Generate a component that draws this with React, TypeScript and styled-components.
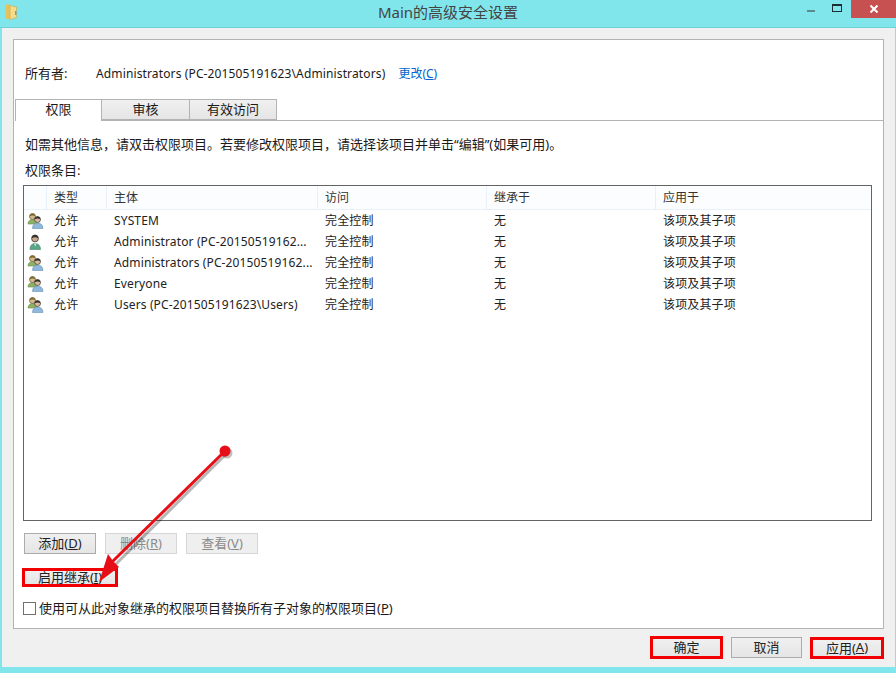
import React from "react";
import styled, { createGlobalStyle } from "styled-components";

const Global = createGlobalStyle`
  html, body { margin: 0; padding: 0; background: #80e6ec; }
  body { font-family: "Noto Sans", "Noto Sans CJK SC", sans-serif; font-size: 12px; color: #1a1a1a; }
  #root { width: 896px; height: 673px; overflow: hidden; }
`;

const Win = styled.div`
  position: relative;
  width: 896px;
  height: 673px;
  display: flex;
  flex-direction: column;
  background: #80e6ec;
`;

const TitleBar = styled.header`
  height: 27px;
  flex: none;
  display: flex;
  align-items: flex-start;
  border-bottom: 1px solid #6fcfd6;
`;

const FolderSlot = styled.div`
  width: 20px;
  padding: 4px 0 0 5px;
  box-sizing: border-box;
  flex: none;
`;

const Title = styled.div`
  flex: 1;
  text-align: center;
  font-size: 15px;
  line-height: 25px;
  padding-left: 78px;
  color: #444;
`;

const Controls = styled.div`
  display: flex;
  flex: none;
  align-items: flex-start;
`;

const Ctl = styled.div<{ $w: number; $top: number }>`
  width: ${(p) => p.$w}px;
  height: 18px;
  box-sizing: border-box;
  padding-top: ${(p) => p.$top}px;
  display: flex;
  justify-content: center;
  & svg { display: block; }
`;

const CloseCtl = styled(Ctl)`
  background: #c75050;
`;

const Body = styled.div`
  flex: 1;
  margin: 0 1px 6px 2px;
  background: #f0f0f0;
  display: flex;
  flex-direction: column;
  padding: 11px 11px 0 11px;
  min-height: 0;
`;

const Panel = styled.section`
  height: 590px;
  flex: none;
  box-sizing: border-box;
  background: #fff;
  border: 1px solid #b3b3b3;
  padding: 23px 0 0 1px;
`;

const OwnerRow = styled.div`
  display: flex;
  align-items: center;
  height: 20px;
  padding-left: 10px;
`;

const OwnerLabel = styled.span`
  width: 71px;
  font-size: 13px;
  margin-top: -1px;
`;

const OwnerName = styled.span`
  letter-spacing: 0.13px;
`;

const Link = styled.span`
  color: #0066cc;
  margin-left: 13px;
`;

const TabStrip = styled.div`
  display: flex;
  height: 22px;
  margin-top: 16px;
  box-sizing: border-box;
  border-bottom: 1px solid #b3b3b3;
`;

const Tab = styled.div<{ $active?: boolean; $w: number }>`
  width: ${(p) => p.$w}px;
  box-sizing: border-box;
  height: ${(p) => (p.$active ? 22 : 21)}px;
  text-align: center;
  line-height: 19px;
  font-size: 13px;
  margin-right: -1px;
  border: 1px solid #b3b3b3;
  border-bottom: ${(p) => (p.$active ? "0" : "1px solid #b3b3b3")};
  background: ${(p) => (p.$active ? "#fff" : "linear-gradient(#f0f0f0, #e5e5e5)")};
  position: relative;
  z-index: ${(p) => (p.$active ? 1 : 0)};
`;

const TabBody = styled.div`
  padding: 14px 11px 0 8px;
`;

const Desc = styled.div`
  height: 18px;
  line-height: 18px;
  padding-left: 2px;
  font-size: 13px;
  white-space: nowrap;
`;

const SubLabel = styled(Desc)`
  margin-top: 8px;
`;

const List = styled.div`
  margin-top: 6px;
  height: 336px;
  box-sizing: border-box;
  border: 1px solid #646464;
  background: #fff;
`;

const GRID = "23px 60px 211px 169px 169px 1fr";

const Head = styled.div`
  display: grid;
  grid-template-columns: ${GRID};
  height: 24px;
  box-sizing: border-box;
  border-bottom: 1px solid #e8f1fa;
  background: #fcfdfe;
`;

const HeadCell = styled.div`
  line-height: 24px;
  padding-left: 7px;
  border-right: 1px solid #e8f1fa;
  color: #333;
  &:last-child { border-right: 0; }
`;

const Row = styled.div`
  display: grid;
  grid-template-columns: ${GRID};
  height: 21px;
  align-items: center;
  line-height: 21px;
`;

const Cell = styled.div`
  padding-left: 7px;
  white-space: nowrap;
  overflow: hidden;
  letter-spacing: 0.13px;
  color: #222;
`;

const IconCell = styled.div`
  display: flex;
  align-items: center;
  padding-left: 3px;
  margin-right: -4px;
`;

const ActionRow = styled.div`
  display: flex;
  gap: 9px;
  margin-top: 12px;
  padding-left: 1px;
`;

const Btn = styled.div<{ $w: number; $h: number; $disabled?: boolean; $marked?: boolean }>`
  width: ${(p) => p.$w}px;
  height: ${(p) => p.$h}px;
  box-sizing: border-box;
  display: flex;
  align-items: center;
  justify-content: center;
  padding-bottom: 2px;
  white-space: nowrap;
  font-size: 13px;
  color: ${(p) => (p.$disabled ? "#8a8a8a" : "#222")};
  border: ${(p) =>
    p.$marked ? "3px solid #f20000" : p.$disabled ? "1px solid #d6d6d6" : "1px solid #acacac"};
  background: ${(p) => (p.$disabled ? "#efefef" : "linear-gradient(#f0f0f0, #e5e5e5)")};
`;

const RaisedBtn = styled(Btn)`
  margin-top: -1px;
`;

const EnableWrap = styled.div`
  margin-top: 14px;
  margin-left: -1px;
`;

const CheckRow = styled.label`
  display: flex;
  align-items: center;
  height: 18px;
  margin-top: 12px;
  font-size: 13px;
  white-space: nowrap;
`;

const CheckText = styled.span`
  margin-top: -2px;
`;

const CheckBox = styled.span`
  width: 13px;
  height: 13px;
  box-sizing: border-box;
  border: 1px solid #707070;
  background: #fff;
  margin-right: 3px;
  flex: none;
`;

const Footer = styled.footer`
  display: flex;
  justify-content: flex-end;
  align-items: flex-start;
  margin-top: 8px;
  gap: 8px;
`;

const ArrowLayer = styled.svg`
  position: absolute;
  left: 0;
  top: 0;
  pointer-events: none;
`;

const Folder = () => (
  <svg width="13" height="16" viewBox="0 0 13 16" style={{ display: "block" }}>
    <path d="M0.500 0.500h4l1 1v13.500h-5z" fill="#e6c25c" />
    <path d="M5 1.500l6.500 1.500v10.500l-6.500 2z" fill="#f4dc8a" stroke="#cda94a" strokeWidth=".6" />
    <rect x="10" y="7" width="1.500" height="4" fill="#5f9fd4" />
  </svg>
);

const Group = () => (
  <svg width="17" height="16" viewBox="0 0 17 16">
    <path d="M1 11c0-3 2-4.500 4.500-4.500S10 8 10 11z" fill="#8db263" stroke="#6a8a4a" strokeWidth=".6" />
    <circle cx="5.500" cy="3.500" r="3" fill="#d6b98c" stroke="#6a5a34" strokeWidth=".7" />
    <path d="M2.700 3.500c0-2 1.300-3 2.800-3s2.800 1 2.800 3c-1.500-1.500-3.500-1.500-5.600 0z" fill="#7b6a30" />
    <path d="M5.500 15.500c0-3.800 2.200-5.500 5-5.500s5.500 1.700 5.500 5.500z" fill="#8fb8dc" stroke="#6890b4" strokeWidth=".6" />
    <circle cx="10.500" cy="6.500" r="3" fill="#d8b89c" stroke="#3f3a34" strokeWidth=".7" />
    <path d="M7.600 6.500c0-2 1.400-3 2.900-3s2.900 1 2.900 3c-1.600-1.300-3.900-1.300-5.800 0z" fill="#33302c" />
  </svg>
);

const Single = () => (
  <svg width="17" height="16" viewBox="0 0 17 16">
    <path d="M3 15.500c0-4 2-6 5-6s5.500 2 5.500 6z" fill="#5aa587" stroke="#438468" strokeWidth=".6" />
    <path d="M7 9.500h2.500l-1.200 3z" fill="#e6e6e6" />
    <circle cx="8" cy="4.500" r="3.400" fill="#c9a98a" stroke="#3d3a34" strokeWidth=".8" />
    <path d="M4.700 4.500c0-2.500 1.600-3.700 3.300-3.700s3.300 1.200 3.300 3.700c-1.800-1.600-4.600-1.600-6.600 0z" fill="#34302c" />
  </svg>
);

const rows = [
  { icon: "g", name: "SYSTEM" },
  { icon: "s", name: "Administrator (PC-20150519162..." },
  { icon: "g", name: "Administrators (PC-20150519162..." },
  { icon: "g", name: "Everyone" },
  { icon: "g", name: "Users (PC-201505191623\\Users)" },
];

export default function App() {
  return (
    <Win>
      <Global />
      <TitleBar>
        <FolderSlot>
          <Folder />
        </FolderSlot>
        <Title>Main的高级安全设置</Title>
        <Controls>
          <Ctl $w={25} $top={10}>
            <svg width="8" height="2"><rect width="8" height="2" fill="#5b8a90" /></svg>
          </Ctl>
          <Ctl $w={28} $top={4}>
            <svg width="10" height="8"><rect x=".5" y=".5" width="9" height="7" fill="none" stroke="#1c2c30" /><rect width="10" height="2" fill="#1c2c30" /></svg>
          </Ctl>
          <CloseCtl $w={45} $top={5}>
            <svg width="8" height="8" viewBox="0 0 8 8"><path d="M.5 .5l7 7M7.500 .5l-7 7" stroke="#fff" strokeWidth="2" /></svg>
          </CloseCtl>
        </Controls>
      </TitleBar>
      <Body>
        <Panel>
          <OwnerRow>
            <OwnerLabel>所有者:</OwnerLabel>
            <OwnerName>Administrators (PC-201505191623\Administrators)</OwnerName>
            <Link>更改(<u>C</u>)</Link>
          </OwnerRow>
          <TabStrip>
            <Tab $active $w={87}>权限</Tab>
            <Tab $w={89}>审核</Tab>
            <Tab $w={88}>有效访问</Tab>
          </TabStrip>
          <TabBody>
            <Desc>如需其他信息，请双击权限项目。若要修改权限项目，请选择该项目并单击“编辑”(如果可用)。</Desc>
            <SubLabel>权限条目:</SubLabel>
            <List>
              <Head>
                <HeadCell />
                <HeadCell>类型</HeadCell>
                <HeadCell>主体</HeadCell>
                <HeadCell>访问</HeadCell>
                <HeadCell>继承于</HeadCell>
                <HeadCell>应用于</HeadCell>
              </Head>
              {rows.map((r) => (
                <Row key={r.name}>
                  <IconCell>{r.icon === "g" ? <Group /> : <Single />}</IconCell>
                  <Cell>允许</Cell>
                  <Cell>{r.name}</Cell>
                  <Cell>完全控制</Cell>
                  <Cell>无</Cell>
                  <Cell>该项及其子项</Cell>
                </Row>
              ))}
            </List>
            <ActionRow>
              <Btn $w={72} $h={21}>添加(<u>D</u>)</Btn>
              <Btn $w={72} $h={21} $disabled>删除(<u>R</u>)</Btn>
              <Btn $w={72} $h={21} $disabled>查看(<u>V</u>)</Btn>
            </ActionRow>
            <EnableWrap>
              <Btn $w={96} $h={19} $marked>启用继承(<u>I</u>)</Btn>
            </EnableWrap>
            <CheckRow>
              <CheckBox />
              <CheckText>使用可从此对象继承的权限项目替换所有子对象的权限项目(<u>P</u>)</CheckText>
            </CheckRow>
          </TabBody>
        </Panel>
        <Footer>
          <RaisedBtn $w={73} $h={23} $marked>确定</RaisedBtn>
          <Btn $w={71} $h={21}>取消</Btn>
          <Btn $w={74} $h={22} $marked>应用(<u>A</u>)</Btn>
        </Footer>
      </Body>
      <ArrowLayer width="896" height="673" viewBox="0 0 896 673">
        <path d="M227 453L114 566" stroke="#000" strokeWidth="3" opacity=".28" />
        <circle cx="227" cy="453" r="5.500" fill="#000" opacity=".25" />
        <path d="M225 451L112 562" stroke="#e60f18" strokeWidth="3" />
        <circle cx="225" cy="451" r="5.500" fill="#e60f18" />
        <path d="M99 582L108 554L113 561L119 567z" fill="#e60f18" />
      </ArrowLayer>
    </Win>
  );
}
